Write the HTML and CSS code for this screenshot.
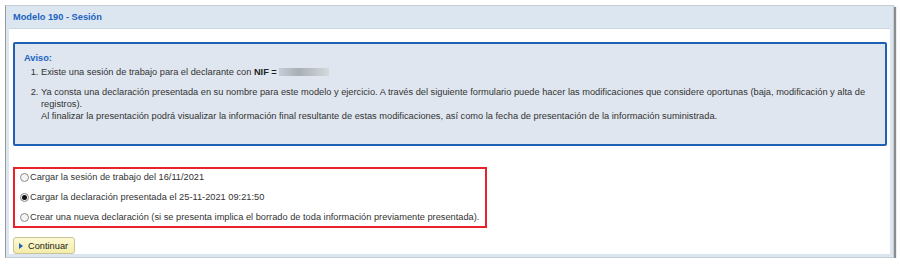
FILE: index.html
```html
<!DOCTYPE html>
<html lang="es">
<head>
    <meta charset="UTF-8">
    <title>Modelo 190 - Sesión</title>
    <link rel="stylesheet" href="styles.css">
</head>
<body>

<div class="panel">
    <div class="panel-header">Modelo 190 - Sesión</div>
    <div class="panel-body">
        <div class="aviso">
            <div class="aviso-title">Aviso:</div>
            <ol class="aviso-list">
                <li>Existe una sesión de trabajo para el declarante con <b>NIF =</b> <span class="blur"></span></li>
                <li>Ya consta una declaración presentada en su nombre para este modelo y ejercicio. A través del siguiente formulario puede hacer las modificaciones que considere oportunas (baja, modificación y alta de registros).<br>Al finalizar la presentación podrá visualizar la información final resultante de estas modificaciones, así como la fecha de presentación de la información suministrada.</li>
            </ol>
        </div>

        <div class="options">
            <label class="option"><input type="radio" name="opcion" class="radio">Cargar la sesión de trabajo del 16/11/2021</label>
            <label class="option"><input type="radio" name="opcion" class="radio" checked>Cargar la declaración presentada el 25-11-2021 09:21:50</label>
            <label class="option"><input type="radio" name="opcion" class="radio">Crear una nueva declaración (si se presenta implica el borrado de toda información previamente presentada).</label>
        </div>

        <button class="button"><span class="arrow"></span>Continuar</button>
    </div>
</div>

</body>
</html>
```

FILE: styles.css
```css
* {
    box-sizing: border-box;
    margin: 0;
    padding: 0;
}

body {
    font-family: 'Liberation Sans', Arial, sans-serif;
    font-size: 9.25px;
    color: #333;
    background: #fff;
    padding: 5px 0 0 5px;
}

.panel {
    width: 889px;
    height: 253px;
    background: #dce6f0;
    border: 1px solid #c4ccd4;
    border-left-color: #9a9a9a;
    box-shadow: 2px 2px 1px #8c8c8c;
    padding: 0 3px 3px 3px;
    display: flex;
    flex-direction: column;
}

.panel-header {
    height: 23px;
    line-height: 22px;
    padding-left: 4px;
    font-weight: bold;
    color: #1b63bf;
    border-bottom: 1px solid #ccd6e0;
}

.panel-body {
    flex: 1;
    background: #fff;
    padding: 13px 3px 0 4px;
}

.aviso {
    background: #dfe6ef;
    border: 2px solid #1f5fb4;
    border-radius: 2px;
    height: 104px;
    padding: 8px 6px 0 9px;
}

.aviso-title {
    font-weight: bold;
    color: #1b63bf;
    line-height: 13px;
    margin-bottom: 1px;
}

.aviso-list {
    padding-left: 17px;
    line-height: 12px;
}

.aviso-list li {
    margin-bottom: 8px;
}

.aviso-list b {
    color: #222;
}

.blur {
    display: inline-block;
    width: 50px;
    height: 8px;
    vertical-align: -1px;
    background: linear-gradient(90deg, #c6ccd2, #aab0b6 40%, #bfc4ca 70%, #d6dadf);
}

.options {
    margin-top: 21px;
    width: 474px;
    border: 2px solid #e8222a;
    padding-bottom: 1px;
    display: flex;
    flex-direction: column;
    gap: 4px;
}

.option {
    height: 16px;
    display: flex;
    align-items: center;
    padding-left: 5px;
}

.radio {
    appearance: none;
    width: 9px;
    height: 9px;
    border: 1px solid #8a8a8a;
    border-radius: 50%;
    background: #f4f4f4;
    margin-right: 1px;
    display: inline-flex;
    align-items: center;
    justify-content: center;
}

.radio:checked::after {
    content: '';
    width: 5px;
    height: 5px;
    border-radius: 50%;
    background: #111;
}

.button {
    margin-top: 9px;
    display: flex;
    align-items: center;
    height: 17px;
    padding: 0 6px 0 5px;
    font-family: 'Liberation Sans', Arial, sans-serif;
    font-size: 9.25px;
    color: #222;
    background: linear-gradient(#fdf9d4, #f3eca8);
    border: 1px solid #c9c296;
    border-radius: 3px;
}

.arrow {
    width: 0;
    height: 0;
    border-top: 3px solid transparent;
    border-bottom: 3px solid transparent;
    border-left: 4px solid #1f5fb4;
    margin-right: 5px;
}
```
